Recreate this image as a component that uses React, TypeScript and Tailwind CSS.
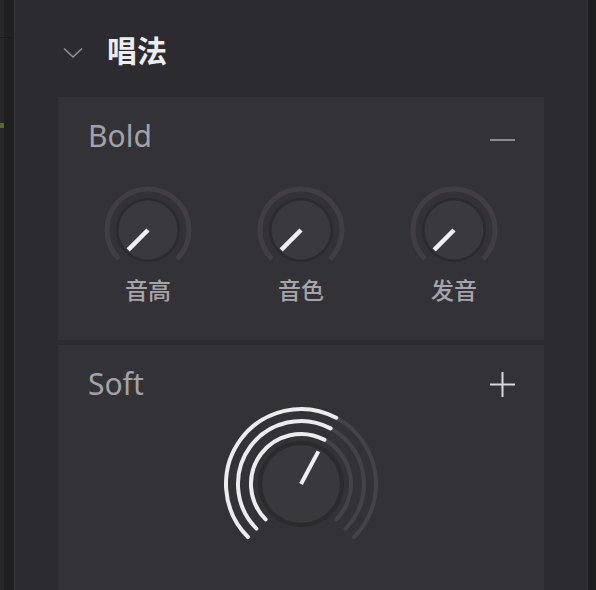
import React from 'react';

const FONT = { fontFamily: '"Noto Sans", "Noto Sans CJK SC", sans-serif' };

// point on a circle, angle in degrees clockwise from 12 o'clock
const pt = (cx: number, cy: number, r: number, deg: number) => {
  const a = (deg * Math.PI) / 180;
  return [cx + r * Math.sin(a), cy - r * Math.cos(a)];
};

const arc = (cx: number, cy: number, r: number, from: number, to: number) => {
  const [x1, y1] = pt(cx, cy, r, from);
  const [x2, y2] = pt(cx, cy, r, to);
  const large = to - from > 180 ? 1 : 0;
  return `M${x1.toFixed(2)} ${y1.toFixed(2)} A${r} ${r} 0 ${large} 1 ${x2.toFixed(2)} ${y2.toFixed(2)}`;
};

const SmallKnob: React.FC<{ label: string }> = ({ label }) => {
  const [ix, iy] = pt(45, 45, 28, -135);
  return (
    <div className="flex flex-col items-center">
      <svg width="90" height="90" viewBox="0 0 90 90">
        <path d={arc(45, 45, 41, -135, 135)} fill="none" stroke="#413f44" strokeWidth="5" />
        <circle cx="45" cy="45" r="32" fill="#2b2a2d" />
        <circle cx="45" cy="45" r="29.5" fill="#3a393d" />
        <line x1="45" y1="45" x2={ix} y2={iy} stroke="#efeef1" strokeWidth="4.5" />
      </svg>
      <span className="mt-[4px] text-[23px] font-medium leading-none text-[#a6a5aa]">{label}</span>
    </div>
  );
};

const BigKnob: React.FC = () => {
  const value = 28;
  const [ix, iy] = pt(85, 85, 37, value);
  return (
    <svg width="170" height="170" viewBox="0 0 170 170">
      {[50, 63, 75].map((r) => (
        <g key={r}>
          <path d={arc(85, 85, r, value, 135)} fill="none" stroke="#444347" strokeWidth="4" strokeLinecap="round" />
          <path d={arc(85, 85, r, -135, value)} fill="none" stroke="#ecebee" strokeWidth="4" strokeLinecap="round" />
        </g>
      ))}
      <circle cx="85" cy="85" r="43" fill="#2b2a2d" />
      <circle cx="85" cy="85" r="39" fill="#39383c" />
      <line x1="85" y1="85" x2={ix} y2={iy} stroke="#efeef1" strokeWidth="4" />
    </svg>
  );
};

const App: React.FC = () => {
  return (
    <div className="flex h-[590px] w-[596px] overflow-hidden bg-[#1e1e20]" style={FONT}>
      {/* neighbouring track lane */}
      <div className="flex w-[14px] shrink-0">
        <div className="flex w-[4px] flex-col bg-[#27272a]">
          <div className="h-[37px]" />
          <div className="h-px bg-[#1a1a1c]" />
          <div className="h-[85px]" />
          <div className="h-[5px] bg-[#58692f]" />
        </div>
        <div className="flex flex-1 flex-col bg-[#1f1f21]">
          <div className="h-[37px]" />
          <div className="h-px bg-[#19191b]" />
        </div>
      </div>

      {/* inspector panel */}
      <div className="flex w-[574px] shrink-0 flex-col border-x border-[#36353a] bg-[#2c2b2f]">
        <div className="h-[3px] bg-[#29292b]" />
        <div className="h-[2px] bg-[#1d1d1f]" />

        <div className="flex items-center pl-[48px] pt-[36px]">
          <svg width="20" height="12" viewBox="0 0 20 12" className="mt-[3px]">
            <path d="M1 1.5 L10 10 L19 1.5" fill="none" stroke="#909095" strokeWidth="1.6" />
          </svg>
          <span className="ml-[24px] text-[30px] font-bold leading-none text-[#ededf0]">唱法</span>
        </div>

        <div className="mt-[31px] flex flex-col gap-[5px] px-[43px]">
          {/* Bold */}
          <div className="h-[243px] bg-[#333236] pt-[24px]">
            <div className="flex items-center justify-between pl-[30px] pr-[29px]">
              <span className="text-[30px] leading-none text-[#a3a2a8]">Bold</span>
              <div className="mt-[7px] h-[2px] w-[25px] bg-[#8d8c91]" />
            </div>
            <div className="mt-[34px] flex justify-center gap-[63px]">
              <SmallKnob label="音高" />
              <SmallKnob label="音色" />
              <SmallKnob label="发音" />
            </div>
          </div>

          {/* Soft */}
          <div className="h-[260px] bg-[#333236] pt-[24px]">
            <div className="flex items-center justify-between pl-[30px] pr-[29px]">
              <span className="text-[30px] leading-none text-[#a3a2a8]">Soft</span>
              <svg width="25" height="25" viewBox="0 0 25 25" className="mt-[1px]">
                <path d="M0 12.5 H25 M12.5 0 V25" stroke="#d9d8dc" strokeWidth="2" />
              </svg>
            </div>
            <div className="flex justify-center">
              <BigKnob />
            </div>
          </div>
        </div>
      </div>

      <div className="flex-1 bg-[#1d1d1f]" />
    </div>
  );
};

export default App;
